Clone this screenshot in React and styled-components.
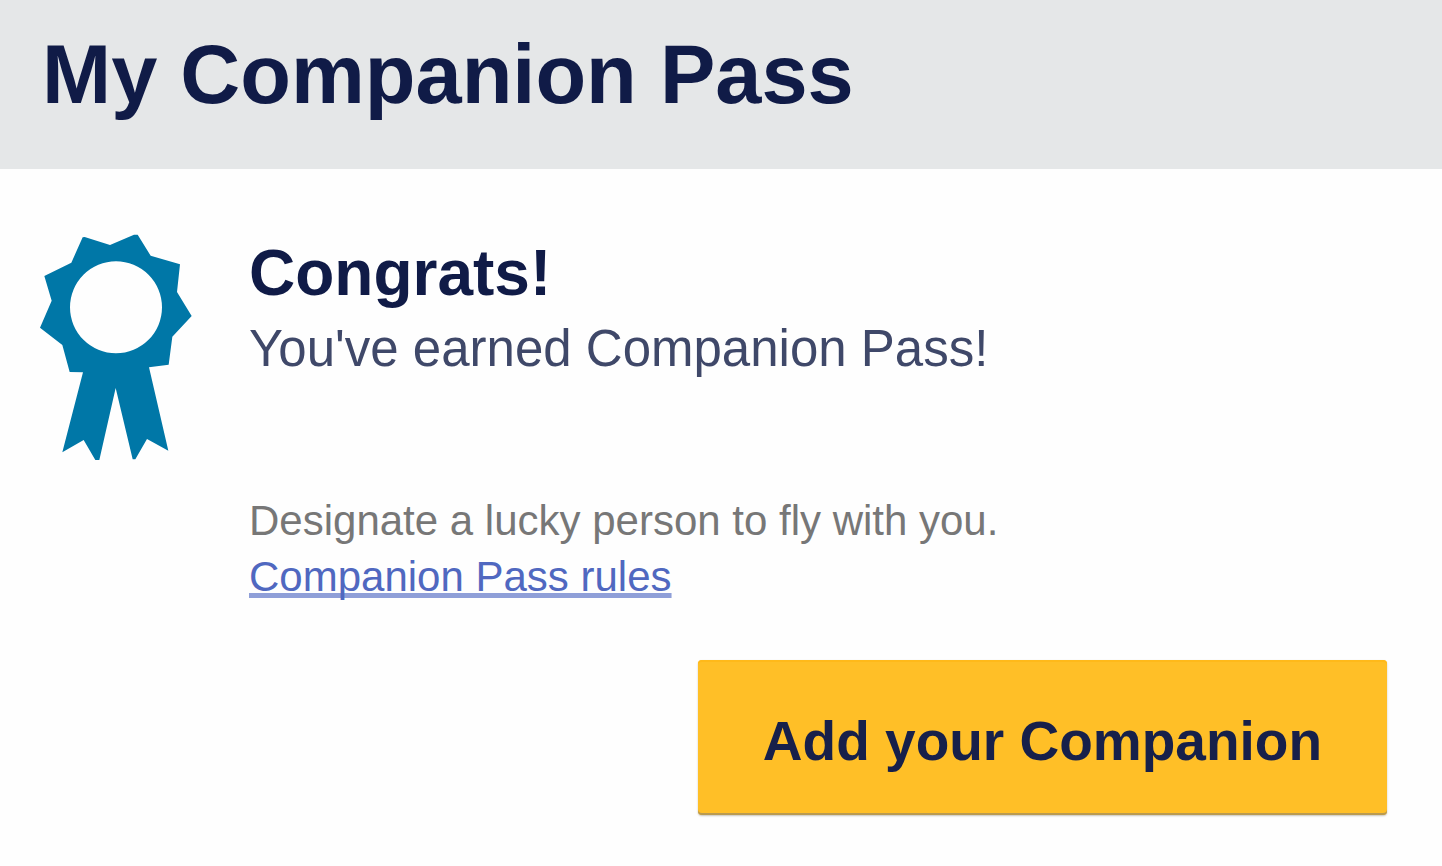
import React from "react";
import styled, { createGlobalStyle } from "styled-components";

const navy = "#101b47";

const GlobalStyle = createGlobalStyle`
  * {
    box-sizing: border-box;
  }

  body {
    margin: 0;
    background: #fefefe;
    font-family: "Liberation Sans", Arial, sans-serif;
  }
`;

const Header = styled.header`
  padding: 27px 42px 46px;
  background: #e5e7e8;
`;

const Title = styled.h1`
  margin: 0;
  color: ${navy};
  font-size: 83px;
  line-height: 96px;
  font-weight: 700;
`;

const Content = styled.main`
  padding: 64px 55px 48px 39px;
`;

const Message = styled.section`
  display: flex;
  align-items: flex-start;
  gap: 56px;
`;

const Ribbon = styled.svg`
  flex: none;
  width: 154px;
  height: 228px;
  fill: #0077a7;
`;

const Details = styled.div`
  flex: 1;
  min-width: 0;
`;

const Heading = styled.h2`
  margin: 0;
  color: ${navy};
  font-size: 64px;
  line-height: 80px;
  font-weight: 700;
`;

const Lead = styled.p`
  margin: 0 0 108px;
  color: #3f4869;
  font-size: 51px;
  line-height: 72px;
`;

const Note = styled.p`
  margin: 0;
  color: #777;
  font-size: 42px;
  line-height: 56px;
`;

const RulesLink = styled.a`
  color: #5068c0;
  text-decoration: underline;
  text-decoration-color: #8f9fd8;
  text-decoration-thickness: 5px;
  text-decoration-skip-ink: none;
  text-underline-offset: 2px;
`;

const Actions = styled.div`
  display: flex;
  justify-content: flex-end;
  margin-top: 55px;
`;

const Button = styled.button`
  padding: 49px 65px 42px;
  border: 0;
  border-radius: 4px;
  background: #ffbf27;
  box-shadow: inset 0 2px #ffb91a, inset 0 -2px #b99a50, 0 1px 2px #c8c4bc;
  color: #17204a;
  font-family: inherit;
  font-size: 55px;
  line-height: 64px;
  font-weight: 700;
  cursor: pointer;
`;

const RibbonIcon = () => (
  <Ribbon viewBox="57 39 462 684" aria-hidden="true">
    <path
      fillRule="evenodd"
      d="M188 52 L194 51 L270 75 L342 44 L353 44 L392 107 L480 133 L471 216 L515 288 L457 350 L446 434 L387 442 L445 692 L381 657 L346 718 L338 718 L287 504 L238 720 L226 720 L191 660 L127 697 L189 457 L149 456 L127 375 L60 323 L95 242 L73 168 L154 128 Z M288 124 A138 138 0 1 0 288 400 A138 138 0 1 0 288 124 Z"
    />
  </Ribbon>
);

const App = () => (
  <>
    <GlobalStyle />
    <Header>
      <Title>My Companion Pass</Title>
    </Header>
    <Content>
      <Message>
        <RibbonIcon />
        <Details>
          <Heading>Congrats!</Heading>
          <Lead>You've earned Companion Pass!</Lead>
          <Note>Designate a lucky person to fly with you.</Note>
          <Note>
            <RulesLink href="#rules">Companion Pass rules</RulesLink>
          </Note>
        </Details>
      </Message>
      <Actions>
        <Button type="button">Add your Companion</Button>
      </Actions>
    </Content>
  </>
);

export default App;
